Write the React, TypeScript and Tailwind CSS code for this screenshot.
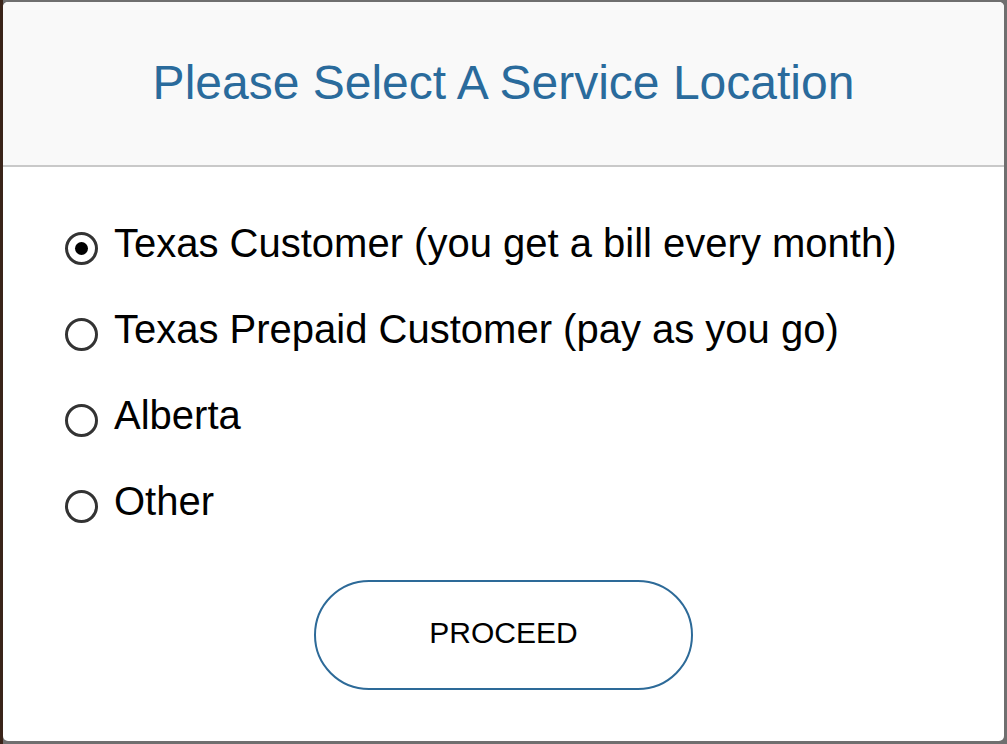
import { useState } from 'react';

const options = [
    'Texas Customer (you get a bill every month)',
    'Texas Prepaid Customer (pay as you go)',
    'Alberta',
    'Other',
];

export default function App() {
    const [selected, setSelected] = useState(0);

    return (
        <div className="w-[1007px] h-[744px] bg-[#6f6f6f] border-l-[3px] border-[#3a2419] pt-[2px] pr-[3px] pb-[3px]" style={{ fontFamily: '"Liberation Sans", Arial, sans-serif' }}>
            <div className="h-full bg-white rounded-[5px] overflow-hidden flex flex-col">
                <div className="h-[165px] shrink-0 bg-[#f9f9f9] border-b-2 border-[#c9c9c9] flex items-center justify-center">
                    <h1 className="text-[48px] leading-none text-[#2a6b9c] pb-[1px]">Please Select A Service Location</h1>
                </div>
                <div className="flex flex-col pl-[62px] pt-[33px]">
                    {options.map((label, i) => (
                        <label key={label} className="h-[86px] flex items-center gap-[16px] cursor-pointer" onClick={() => setSelected(i)}>
                            <span className="mt-[10px] w-[33px] h-[33px] rounded-full border-[3px] border-[#333] flex items-center justify-center shrink-0">
                                {selected === i && <span className="w-[13px] h-[13px] rounded-full bg-black" />}
                            </span>
                            <span className="text-[40px] leading-[40px] text-black">{label}</span>
                        </label>
                    ))}
                </div>
                <div className="flex justify-center pt-[36px]">
                    <button className="w-[379px] h-[110px] rounded-full border-2 border-[#2d6a98] bg-white text-[30px] text-black pb-[6px]">
                        PROCEED
                    </button>
                </div>
            </div>
        </div>
    );
}
